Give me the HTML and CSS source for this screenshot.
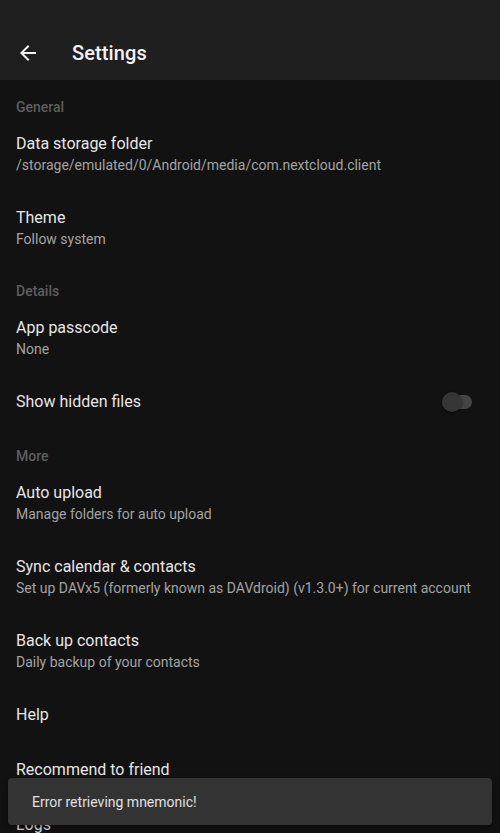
FILE: index.html
```html
<!DOCTYPE html>
<html lang="en">
<head>
  <meta charset="UTF-8" />
  <meta name="viewport" content="width=device-width, initial-scale=1.0" />
  <title>Settings</title>
  <link rel="stylesheet" href="styles.css">
</head>
<body>
  <header class="appbar">
    <svg class="back" viewBox="0 0 24 24" width="24" height="24">
      <path d="M20 11H7.83l5.59-5.59L12 4l-8 8 8 8 1.41-1.41L7.83 13H20v-2z" fill="#f2f2f2"/>
    </svg>
    <h1>Settings</h1>
  </header>

  <main class="list">
    <div class="category">General</div>
    <div class="pref">
      <div class="title">Data storage folder</div>
      <div class="summary">/storage/emulated/0/Android/media/com.nextcloud.client</div>
    </div>
    <div class="pref">
      <div class="title">Theme</div>
      <div class="summary">Follow system</div>
    </div>

    <div class="category">Details</div>
    <div class="pref">
      <div class="title">App passcode</div>
      <div class="summary">None</div>
    </div>
    <div class="pref single switch-row">
      <div class="title">Show hidden files</div>
      <div class="switch"><span class="thumb"></span></div>
    </div>

    <div class="category">More</div>
    <div class="pref">
      <div class="title">Auto upload</div>
      <div class="summary">Manage folders for auto upload</div>
    </div>
    <div class="pref">
      <div class="title">Sync calendar &amp; contacts</div>
      <div class="summary">Set up DAVx5 (formerly known as DAVdroid) (v1.3.0+) for current account</div>
    </div>
    <div class="pref">
      <div class="title">Back up contacts</div>
      <div class="summary">Daily backup of your contacts</div>
    </div>
    <div class="pref single">
      <div class="title">Help</div>
    </div>
    <div class="pref single">
      <div class="title">Recommend to friend</div>
    </div>
    <div class="pref single">
      <div class="title">Logs</div>
    </div>
  </main>

  <div class="snackbar">Error retrieving mnemonic!</div>
</body>
</html>
```

FILE: styles.css
```css
* {
  margin: 0;
  padding: 0;
  box-sizing: border-box;
}

html, body {
  height: 100%;
  overflow: hidden;
}

body {
  font-family: Roboto, "Noto Sans", sans-serif;
  background: #121212;
  color: #e6e6e6;
  position: relative;
}

.appbar {
  height: 80px;
  background: #1f1f1f;
  display: flex;
  align-items: center;
  padding: 25px 0 0 16px;
}

.back {
  display: block;
  flex-shrink: 0;
}

.appbar h1 {
  margin-left: 32px;
  font-size: 20px;
  font-weight: 500;
  color: #f2f2f2;
  letter-spacing: 0.1px;
}

.list {
  padding-top: 1px;
}

.category {
  padding: 16px 16px 0;
  font-size: 14px;
  line-height: 20px;
  font-weight: 500;
  color: #5e5e5e;
}

.pref {
  padding: 16px;
}

.pref.single {
  padding-bottom: 17px;
}

.title {
  font-size: 16px;
  line-height: 22px;
  color: #e6e6e6;
}

.summary {
  font-size: 14px;
  line-height: 20px;
  color: #a3a3a3;
  white-space: nowrap;
}

.switch-row {
  display: flex;
  align-items: center;
  justify-content: space-between;
}

.switch {
  position: relative;
  width: 30px;
  height: 14px;
  margin-right: 12px;
  border-radius: 7px;
  background: #454545;
}

.thumb {
  position: absolute;
  left: 0;
  top: -3px;
  width: 20px;
  height: 20px;
  border-radius: 50%;
  background: #363636;
  box-shadow: 0 1px 3px rgba(0, 0, 0, 0.5);
}

.snackbar {
  position: absolute;
  left: 8px;
  right: 8px;
  top: 778px;
  height: 47px;
  padding: 0 24px;
  display: flex;
  align-items: center;
  background: #333333;
  border-radius: 4px;
  font-size: 14px;
  color: #e0e0e0;
  box-shadow: 0 3px 6px rgba(0, 0, 0, 0.4);
}
```
